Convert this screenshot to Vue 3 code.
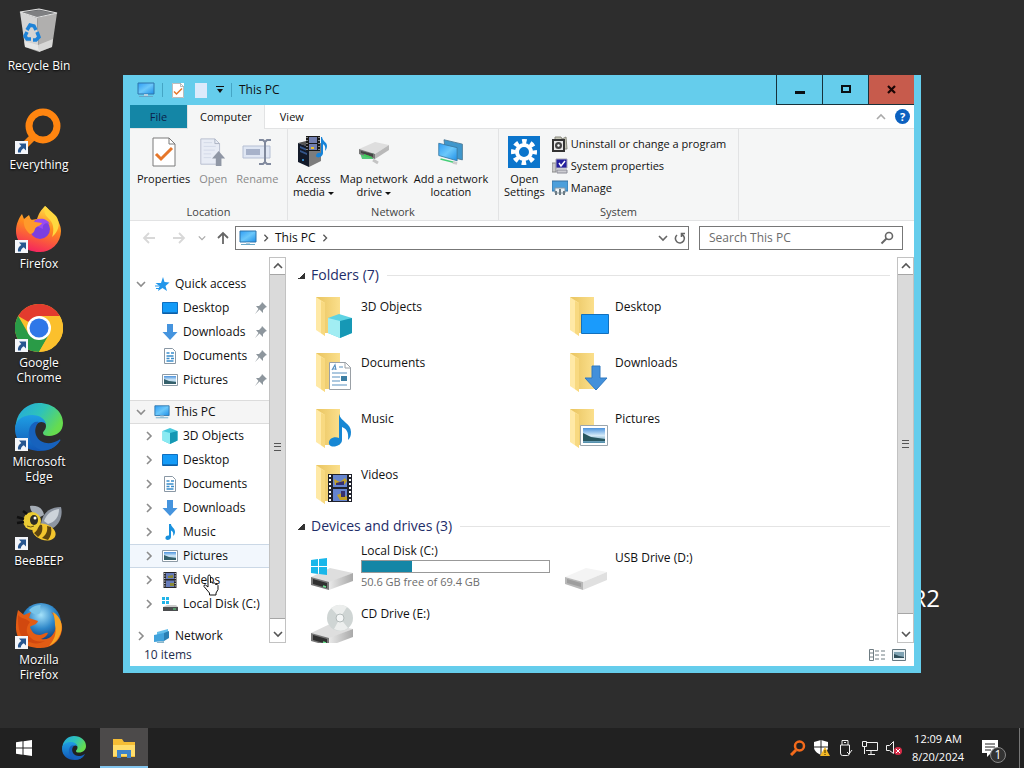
<template>
  <div class="screen">
    <svg class="sprite" aria-hidden="true">
      <defs>
        <linearGradient id="gBlue" x1="0" y1="0" x2="1" y2="1">
          <stop offset="0" stop-color="#2f9df5" /><stop offset=".5" stop-color="#6cc8fa" /><stop offset="1" stop-color="#1e8fe8" />
        </linearGradient>
        <linearGradient id="gFolder" x1="0" y1="0" x2="1" y2="0">
          <stop offset="0" stop-color="#e9c45f" /><stop offset="1" stop-color="#fbdf8c" />
        </linearGradient>
        <linearGradient id="gFox" x1=".7" y1="0" x2=".4" y2="1">
          <stop offset="0" stop-color="#ffe14d" /><stop offset=".45" stop-color="#ff8a1e" /><stop offset="1" stop-color="#f5245f" />
        </linearGradient>
        <linearGradient id="gEdgeA" x1="0" y1="0" x2="1" y2=".5">
          <stop offset="0" stop-color="#22a5e2" /><stop offset=".55" stop-color="#2fc3b8" /><stop offset="1" stop-color="#66dc4e" />
        </linearGradient>
        <linearGradient id="gEdgeB" x1="0" y1="0" x2="0" y2="1">
          <stop offset="0" stop-color="#1f9fe4" /><stop offset="1" stop-color="#1156b5" />
        </linearGradient>
        <linearGradient id="gBin" x1="0" y1="0" x2="1" y2="0">
          <stop offset="0" stop-color="#cfcfcf" /><stop offset=".6" stop-color="#bdbdbd" /><stop offset="1" stop-color="#8c8c8c" />
        </linearGradient>
        <linearGradient id="gDrive" x1="0" y1="0" x2="1" y2="0">
          <stop offset="0" stop-color="#e9e9e9" /><stop offset="1" stop-color="#a9a9a9" />
        </linearGradient>
        <radialGradient id="gGlobe" cx=".5" cy=".3" r=".7">
          <stop offset="0" stop-color="#a5e2fa" /><stop offset=".5" stop-color="#2d86c8" /><stop offset="1" stop-color="#0c2e6b" />
        </radialGradient>
        <linearGradient id="gPhoto" x1="0" y1="0" x2="0" y2="1">
          <stop offset="0" stop-color="#4c93dd" /><stop offset=".5" stop-color="#d4eaf8" /><stop offset="1" stop-color="#4e8ba8" />
        </linearGradient>
      </defs>

      <symbol id="shortcut" viewBox="0 0 13 13">
        <path d="M0 0h13v13H0z" fill="#f4f6fa" />
        <path d="M4 2.500h7v7L8.800 7.300C7 8.300 6 9.500 5.800 11.500H3C2.500 8.500 3.800 6.200 6.300 4.900z" fill="#27568f" />
      </symbol>
      <symbol id="recycle" viewBox="0 0 48 48">
        <path d="M5 5l17 5 2 34-14-4z" fill="#d4d4d4" />
        <path d="M22 10l20-4-5 34-13 5z" fill="#b0afae" />
        <path d="M5 5l19-3 18 4-20 5z" fill="#55575a" />
        <path d="M8 5.500l16-2.500 14 3-16 4z" fill="#7f8082" />
        <path d="M5 5l17 5.500L42 6 24 2z" fill="none" stroke="#e4e4e4" stroke-width="1.200" />
        <path d="M9 34l14 4 15-6-1 8-13 5-14-5z" fill="#f2f2f0" opacity=".6" />
        <g fill="none" stroke="#1e83d8" stroke-width="3.500"><path d="M12 23l3-5 4 1 2 4" /><path d="M22 25l2 5-3 3h-3" /><path d="M16 32h-4l-2-3 2-4" /></g>
      </symbol>
      <symbol id="everything" viewBox="0 0 48 48">
        <path d="M20 29L9 40" stroke="#f58416" stroke-width="7" />
        <circle cx="28" cy="20" r="14" fill="none" stroke="#ff8510" stroke-width="7" />
      </symbol>
      <symbol id="firefox" viewBox="0 0 48 48">
        <path d="M30 1c3 2 5 6 7 9 5 3 9 9 9 16a21 21 0 0 1-22 21C11 47 1 38 1 26 1 19 4 13 7 9l2 5 5-4 2 5 6-1c2-6 4-9 8-13z" fill="url(#gFox)" />
        <circle cx="25" cy="24" r="10" fill="#7c3fe0" />
        <path d="M17 19c5-8 15-6 18 0-5-2-8 1-7 5z" fill="#9a4bf0" />
        <path d="M9 14c4-1 8 0 11 3l7 1c-1 3-6 3-7 6-1 4-3 5-5 5-5-4-7-9-6-15z" fill="#ff9a2b" />
        <path d="M30 1c-2 7 1 10 5 14s4 12 2 17c6-5 8-12 6-17C42 10 36 7 30 1z" fill="#ffd83f" />
      </symbol>
      <symbol id="chrome" viewBox="0 0 48 48">
        <circle cx="24" cy="24" r="24" fill="#fbbf2d" />
        <path d="M24 24L3.200 12A24 24 0 0 1 44.800 12H24z" fill="#e33b2e" />
        <path d="M3.200 12A24 24 0 0 0 24 48l10.400-18L24 24 13.600 30z" fill="#2a9b47" />
        <path d="M24 12h20.800A24 24 0 0 1 24 48l10.400-18z" fill="#fbc02d" />
        <circle cx="24" cy="24" r="12" fill="#fff" /><circle cx="24" cy="24" r="9.500" fill="#2f77e8" />
      </symbol>
      <symbol id="edge" viewBox="0 0 48 48">
        <path d="M1 20C3 8 13 0 24 0c14 0 24 9 24 20 0 8-6 13-14 13-4 0-6-1-6-3s3-3 3-7c0-5-5-9-12-9C9 14 3 18 0 26z" fill="url(#gEdgeA)" />
        <path d="M0 26c0-9 8-14 17-14 8 0 13 4 14 9-2-2-5-3-8-1-5 3-6 10-2 16 5 8 15 8 23 3-4 6-11 9-19 9C11 48 0 39 0 26z" fill="url(#gEdgeB)" />
        <path d="M15 24c-4 10 2 20 11 23 7 1 14-2 19-9 1-1 0-2-1-1-8 5-18 4-22-3-3-5-2-11 2-15-4-1-7 1-9 5z" fill="#1762bd" />
      </symbol>
      <symbol id="bee" viewBox="0 0 48 48">
        <path d="M26 22C27 12 34 5 46 5c2 8-1 17-8 21z" fill="#8d95a1" /><path d="M29 19c3-8 8-11 15-12 0 8-4 13-11 15z" fill="#cdd3da" />
        <path d="M25 15c-6-2-10-6-10-11 7-1 13 2 14 9z" fill="#a6adb6" />
        <ellipse cx="29" cy="30" rx="12" ry="8" transform="rotate(20 29 30)" fill="#f3c52d" />
        <path d="M23 22c1 4-1 7-4 9l4 4c4-3 5-7 4-12zM32 24c1 5-1 9-5 12l6 2c3-4 4-8 3-13z" fill="#5c4410" />
        <circle cx="17" cy="19" r="9" fill="#ebcb34" />
        <ellipse cx="19" cy="18" rx="4" ry="5" fill="#2c2c25" /><circle cx="20" cy="16" r="1.500" fill="#fff" />
        <path d="M9 17l-7-2M9 20l-7 1M12 12L8 9" stroke="#111" stroke-width="2.500" /><path d="M12 24q4 2 7 0" fill="none" stroke="#6d5410" />
      </symbol>
      <symbol id="oldfox" viewBox="0 0 48 48">
        <circle cx="26" cy="22" r="20" fill="url(#gGlobe)" />
        <path d="M14 9c4-4 8-5 12-5-2 3 1 5-1 8-3 3-8 1-11-3z" fill="#79c4e8" />
        <path d="M3 9l6 5 7-3-2 6 9 3c-1 4-6 4-8 6 2 5 4 8 10 8 3 0 6-3 8-2-1 3-4 5-7 6 9 2 16-6 15-17-1-5-3-8-5-10 8 4 12 11 11 18-2 12-11 18-22 18C9 47 0 38 1 24c0-6 1-11 2-15z" fill="#e35c14" />
        <path d="M38 11c8 5 10 13 8 20-2 7-7 12-12 14 5-6 8-12 6-21 0-5-1-9-2-13z" fill="#f8a423" />
        <path d="M3 14c3 4 8 3 12 7-5 6-4 12 1 16 4 4 9 4 14 3-10 6-22 0-25-8-2-6-2-12-2-18z" fill="#c9400d" opacity=".7" />
      </symbol>

      <symbol id="pc" viewBox="0 0 18 16">
        <path d="M1 1h16v11H1z" fill="url(#gBlue)" stroke="#2f75ac" /><path d="M7 12h4v2H7z" fill="#b5cfdf" /><path d="M2 14.500h14" stroke="#67a7c8" stroke-width="1" />
      </symbol>
      <symbol id="doccheck" viewBox="0 0 24 30">
        <path d="M1 1h16l6 6v22H1z" fill="#fff" stroke="#7a7a7a" /><path d="M17 1v6h6" fill="none" stroke="#7a7a7a" />
        <path d="M4 17l5 5 11-11" fill="none" stroke="#e6772a" stroke-width="3" />
      </symbol>
      <symbol id="doc-up" viewBox="0 0 28 32">
        <path d="M1 2h15l5 5v22H1z" fill="#e8ecf5" stroke="#b6bdce" /><path d="M16 2v5h5" fill="none" stroke="#a9b0c0" /><path d="M4 6h9M4 10h13M4 14h12M4 18h8M4 22h8" stroke="#d2d9e8" />
        <path d="M20 15l7 8h-4v8h-6v-8h-4z" fill="#9097a5" />
      </symbol>
      <symbol id="rename" viewBox="0 0 30 28">
        <path d="M1 8h27v12H1z" fill="#dfe6f3" stroke="#b5bfd4" /><path d="M4 11h14v6H4z" fill="#a7b2ca" /><path d="M17 2h4l2 2 2-2h4M17 26h4l2-2 2 2h4M23 4v20" fill="none" stroke="#80899d" stroke-width="2" />
      </symbol>
      <symbol id="media" viewBox="0 0 32 32">
        <path d="M1 7l12-3 11 4-10 4z" fill="#555" /><path d="M1 7l11 4v20L1 26z" fill="#131a29" /><path d="M12 11l12-4v18l-12 6z" fill="#7d7d7d" /><path d="M3 10l7 3v2l-7-3zM3 14l7 3v2l-7-3z" fill="#34568a" /><circle cx="6" cy="24" r="1" fill="#3fa9f5" />
        <path d="M9 0h14v15H9z" fill="#191919" /><path d="M12 1h8v6h-8zM12 8h8v6h-8z" fill="#727fb0" /><path d="M10 1v14M22 1v14" stroke="#eee" stroke-dasharray="1 2" /><path d="M14 11h3v2h-3z" fill="#edc12c" />
        <path d="M25 1c1 5 5 5 5 9 0 2-1 4-2 5 1-5-1-6-2-7v9c0 4-6 6-7 3 0-3 3-4 5-3V1z" fill="#1683d8" />
      </symbol>
      <symbol id="netdrive" viewBox="0 0 32 24">
        <path d="M2 13h14l-1 6H4z" fill="#54c878" /><path d="M1 9L17 2l14 3-14 9z" fill="#dedede" /><path d="M1 9l16 5v5L1 14z" fill="#777" /><path d="M3 11l12 3v3L3 13z" fill="#444" /><path d="M17 14l14-9v5l-14 9z" fill="#b9b9b9" /><path d="M6 14l8 3v1l-8-2z" fill="#39d353" /><path d="M15 20l5 3" stroke="#c4c4c4" stroke-width="3" />
      </symbol>
      <symbol id="netplace" viewBox="0 0 32 30">
        <path d="M8 1l21 5v18L10 19z" fill="#3f97cc" stroke="#4b7894" /><path d="M2 5l21 5v15L2 19z" fill="url(#gBlue)" stroke="#3b7ba3" /><path d="M4 23l16 4" stroke="#45cf78" stroke-width="2" /><path d="M18 27l5 1" stroke="#ccc" stroke-width="3" />
      </symbol>
      <symbol id="gear" viewBox="0 0 32 32">
        <path d="M0 0h32v32H0z" fill="#0b75cc" /><circle cx="16" cy="16" r="10.500" fill="none" stroke="#fff" stroke-width="5" stroke-dasharray="4.400 3.850" stroke-dashoffset="2.200" /><circle cx="16" cy="16" r="7" fill="none" stroke="#fff" stroke-width="4" />
      </symbol>
      <symbol id="uninstall" viewBox="0 0 16 16">
        <path d="M3 1h6l1 2 4-2 1 12H3z" fill="#c5c6b7" stroke="#8b8b80" /><path d="M1 4h11v11H1z" fill="#e8e8e8" stroke="#333" stroke-width="2" /><circle cx="6.500" cy="9.500" r="3.500" fill="#444" /><circle cx="6.500" cy="9.500" r="1.200" fill="#fff" />
      </symbol>
      <symbol id="sysprops" viewBox="0 0 16 16">
        <path d="M0 5h4v9H0z" fill="#c9c9c9" stroke="#8a8a8a" /><path d="M4 1h11v9H4z" fill="#241f9e" stroke="#a5a5b5" /><path d="M7 5l2 3 4-5" fill="none" stroke="#fff" stroke-width="1.500" /><path d="M5 12h10v3H5z" fill="#cdcdd2" stroke="#8d8d98" />
      </symbol>
      <symbol id="manage" viewBox="0 0 16 16">
        <path d="M0 1h16v10H0z" fill="#4c9fdb" stroke="#3772a3" /><path d="M3 8h10v5H3z" fill="#eef3f6" stroke="#8799a5" /><path d="M4 11v4M8 9v6M12 11v4" stroke="#6d7c85" stroke-width="2" />
      </symbol>
      <symbol id="desktop" viewBox="0 0 16 16"><path d="M.5 2.500h15v11H.5z" fill="#149bf7" stroke="#0f6fc0" /><path d="M1 13h14" stroke="#0d4d8b" /></symbol>
      <symbol id="down" viewBox="0 0 16 16"><path d="M5 0h6v8h4.500L8 16 .5 8H5z" fill="#4594de" /></symbol>
      <symbol id="doc" viewBox="0 0 16 16"><path d="M2.500.5h8l3 3v12h-11z" fill="#fff" stroke="#8a98a5" /><path d="M4.500 5h3M9 5h3M4.500 8h7M4.500 10.500h3M9 10.500h3M4.500 13h7" stroke="#3a8dcb" stroke-width="1.300" /></symbol>
      <symbol id="pic" viewBox="0 0 16 16"><path d="M.5 2.500h15v11H.5z" fill="#fff" stroke="#8d9ba6" /><path d="M2 4h12v8H2z" fill="url(#gPhoto)" /><path d="M2 7l5 2 7 1v2H2z" fill="#35606b" /></symbol>
      <symbol id="music" viewBox="0 0 16 16"><path d="M7 0h2c0 3 4 4 4 8 0 2-1 3-2 4 1-4-1-5-2-5.500V13c0 3-5 4-5.500 1.500C3 12 5.500 11 7 11.500z" fill="#1991de" /></symbol>
      <symbol id="video" viewBox="0 0 16 16"><path d="M1.500 0h13v16h-13z" fill="#26262c" /><path d="M4 1h8v6H4zM4 8.500h8V15H4z" fill="#667bbb" /><path d="M6 4l5-1v3H6zM8 11h4v3H8z" fill="#8b8a35" /><path d="M2.800 1v15M13.200 1v15" stroke="#fff" stroke-width="1" stroke-dasharray="1 1.500" /></symbol>
      <symbol id="cube" viewBox="0 0 16 16"><path d="M8 0l7.500 3v9.500L8 16 .5 12.500V3z" fill="#47c9dc" /><path d="M.5 3L8 5v11L.5 12.500z" fill="#8aeaf2" /><path d="M8 5l7.500-2v9.500L8 16z" fill="#1597b3" /></symbol>
      <symbol id="disk" viewBox="0 0 16 16"><path d="M0 1h3v3H0zM4 1h3v3H4zM0 5h3v3H0zM4 5h3v3H4z" fill="#22b4e8" /><path d="M1 11l4-2h9l2 2z" fill="#cacaca" /><path d="M1 11h15v4H1z" fill="#4b4d4f" /><path d="M11 13h3" stroke="#60e080" /></symbol>
      <symbol id="network" viewBox="0 0 16 16"><path d="M3 4l11-3v9L3 13z" fill="#62bdea" /><path d="M0 7l10-2v8L0 14z" fill="#41a3dc" /><path d="M10 5l5-2v7l-5 3z" fill="#2a7fb3" /><path d="M3 15l7-1" stroke="#8ab6cb" stroke-width="2" /></symbol>
      <symbol id="star" viewBox="0 0 16 16"><path d="M9 1l1.500 5 5 .5-4 3.500 1.500 5-4.500-3L4 15l1.500-5L1.500 7H7z" fill="#2296ea" /><path d="M1 10h4M2 12.500h3" stroke="#2296ea" /></symbol>
      <symbol id="pin" viewBox="0 0 12 12"><path d="M7 0l5 5-1.500.5L8 8v3L4.500 7.500 0 12l3.500-5L1 4h3l2.500-2.500z" fill="#8d969d" /></symbol>
      <symbol id="chev" viewBox="0 0 10 10"><path d="M3 1l4 4-4 4" fill="none" stroke="currentColor" stroke-width="1.600" /></symbol>
      <symbol id="chevd" viewBox="0 0 10 10"><path d="M1 3l4 4 4-4" fill="none" stroke="currentColor" stroke-width="1.600" /></symbol>
      <symbol id="chevu" viewBox="0 0 10 10"><path d="M1 7l4-4 4 4" fill="none" stroke="currentColor" stroke-width="1.600" /></symbol>
      <symbol id="arrow" viewBox="0 0 14 14"><path d="M13 7H2M7 2L2 7l5 5" fill="none" stroke="currentColor" stroke-width="1.800" /></symbol>

      <symbol id="folder" viewBox="0 0 48 48"><path d="M5 4h24v36H13z" fill="url(#gFolder)" /><path d="M5 4l9 6v33l-9-6z" fill="#ffe9a6" /><path d="M14 10v33l-4-3V8z" fill="#f8d980" /></symbol>
      <symbol id="big-cube" viewBox="0 0 48 48"><path d="M28 21l13 4v15l-12 5-12-5V25z" fill="#5ed3e3" /><path d="M17 25l12 3v17l-12-5z" fill="#a1edf3" /><path d="M29 28l12-3v15l-12 5z" fill="#1698b5" /></symbol>
      <symbol id="big-desktop" viewBox="0 0 48 48"><path d="M16.500 21.500h27v19h-27z" fill="#1a9bfc" stroke="#1270bd" /></symbol>
      <symbol id="big-doc" viewBox="0 0 48 48"><path d="M18.500 13.500h16l5 5v22h-21z" fill="#fff" stroke="#9aa0a6" /><path d="M34 13v6h6" fill="none" stroke="#9aa0a6" /><path d="M21 21l3-5 1 5M22 20h3M28 18h4M21 24h15M21 28h8M21 32h8M21 36h15" fill="none" stroke="#5b91c0" stroke-width="1.200" /><path d="M30 27h6v5h-6z" fill="#3c7ea3" /></symbol>
      <symbol id="big-down" viewBox="0 0 48 48"><path d="M27 17h8v12h7L31 41 20 29h7z" fill="#4290db" stroke="#2f78c0" /></symbol>
      <symbol id="big-music" viewBox="0 0 48 48"><path d="M28 9c2 8 12 9 12 18 0 4-1 6-3 8 1-9-2-11-6-13v13c0 6-11 9-13 4-1-5 5-8 10-6z" fill="#1787d4" /></symbol>
      <symbol id="big-pic" viewBox="0 0 48 48"><path d="M15.500 20.500h27v20h-27z" fill="#fff" stroke="#9aa5ad" /><path d="M18 23h22v15H18z" fill="url(#gPhoto)" /><path d="M18 28l8 4 14 2v2H18z" fill="#28565f" /></symbol>
      <symbol id="big-video" viewBox="0 0 48 48"><path d="M17 13h24v28H17z" fill="#20222c" /><path d="M22 14h14v12H22zM22 28h14v12H22z" fill="#6584cf" /><path d="M23 18l6 3 5-4 2 3-3 4h-9zM26 34l5-2 5 4v3h-7z" fill="#c3a127" /><path d="M25 22l8-2v4h-8zM30 30h4v6h-4z" fill="#37306d" /><path d="M19 14v27M39 14v27" stroke="#fff" stroke-width="2" stroke-dasharray="2 2" /></symbol>
      <symbol id="drive-base" viewBox="0 0 48 48"><path d="M0 33l19-9 23 5-24 10z" fill="#dedede" /><path d="M0 33l18 5v8L0 41z" fill="#777" /><path d="M2 35l14 4v5L2 40z" fill="#303030" /><path d="M18 38l24-9v8l-24 9z" fill="url(#gDrive)" /><path d="M12 42l3 1" stroke="#6be391" stroke-width="1.500" /></symbol>
      <symbol id="big-disk" viewBox="0 0 48 48"><use href="#drive-base" /><path d="M0 16l7-1v7H0zM8 15l8-1v8H8zM0 23h7v7l-7-1zM8 23h8v8l-8-1z" fill="#19b7ea" /></symbol>
      <symbol id="big-usb" viewBox="0 0 48 48"><path d="M0 33l21-9 21 4-24 10z" fill="#f4f4f4" /><path d="M0 33l18 5v8L0 40z" fill="#b8b8b8" /><path d="M2 35l14 4v4L2 39z" fill="#9e9e9e" /><path d="M18 38l24-10v8l-24 10z" fill="#e0e0e0" /></symbol>
      <symbol id="big-cd" viewBox="0 0 48 48"><use href="#drive-base" /><circle cx="29" cy="18" r="13" fill="#cfd5d4" /><path d="M29 18L20 8q8-6 16-1zM29 18l8 10q-6 5-14 1z" fill="#eceeed" /><circle cx="29" cy="18" r="4" fill="#f4f6f6" stroke="#b4bbba" /></symbol>
      <symbol id="winlogo" viewBox="0 0 16 16"><path d="M0 2.300L6.500 1.300v6.200H0zM7.500 1.200L16 0v7.500H7.500zM0 8.500h6.500v6.200L0 13.700zM7.500 8.500H16V16l-8.500-1.200z" fill="#fff" /></symbol>
      <symbol id="explorer" viewBox="0 0 24 22"><path d="M1 2h9l2 3h11v15H1z" fill="#f5bd35" /><path d="M1 8h22v11H1z" fill="#ffdd6b" /><path d="M5 21v-8h14v8h-4v-4H9v4z" fill="#3f83c8" /></symbol>
      <symbol id="tray-search" viewBox="0 0 16 16"><path d="M6 10l-5 5" stroke="#f36a1b" stroke-width="3" /><circle cx="9.500" cy="6" r="4.500" fill="none" stroke="#f36a1b" stroke-width="2.500" /></symbol>
      <symbol id="tray-shield" viewBox="0 0 16 16"><path d="M7 0l7 2v5c0 4-3 6-7 8-4-2-7-4-7-8V2z" fill="#fff" /><path d="M7 0v15M0 7h14" stroke="#222" /><path d="M11 7l5 9H6z" fill="#f3b825" /><path d="M11 10v3M11 14v1" stroke="#3b2c00" /></symbol>
      <symbol id="tray-usb" viewBox="0 0 16 16"><path d="M4 5V.5h6V5M2.500 5h9v8q0 2.500-2 2.500h-5q-2 0-2-2.500zM6 2.500h2" fill="none" stroke="#f0f0f0" /><path d="M9 12l2 2 3-4" fill="none" stroke="#f0f0f0" /></symbol>
      <symbol id="tray-net" viewBox="0 0 16 16"><path d="M4 2.500h11.500v8H4M9 11v3M6 14.500h7M.5 1.500h4v5h-4zM2.500 7v7" fill="none" stroke="#f0f0f0" /></symbol>
      <symbol id="tray-mute" viewBox="0 0 16 16"><path d="M.5 5.500h3l4-4v12l-4-3h-3z" fill="none" stroke="#f0f0f0" /><circle cx="12" cy="11" r="4" fill="#d72c48" /><path d="M10 9l4 4M14 9l-4 4" stroke="#fff" /></symbol>
      <symbol id="hand" viewBox="0 0 16 22"><path d="M5 13V2.500Q5 1 6.200 1t1.300 1.500V9l.5-1q2-.5 2 1.500.5-1 1.500-.5t1 1.500q2-.8 2.500 1v4l-2 3.500V21H6.500v-2L1 12.500q-.5-2 1.500-1.500z" fill="#fff" stroke="#111" /></symbol>
    </svg>

    <main class="desktop">
      <p class="watermark">R2</p>
      <div class="shortcuts">
        <button v-for="s in shortcuts" :key="s.label" class="shortcut">
          <span class="shortcut-art">
            <svg class="shortcut-icon"><use :href="'#' + s.icon" /></svg>
            <svg v-if="s.link" class="shortcut-arrow"><use href="#shortcut" /></svg>
          </span>
          <span>{{ s.label }}</span>
        </button>
      </div>

      <section class="window" aria-label="This PC">
        <header class="titlebar">
          <svg class="i18"><use href="#pc" /></svg>
          <span class="bar"></span>
          <button class="quick" aria-label="Properties"><svg class="quick-icon white"><use href="#doccheck" /></svg></button>
          <button class="quick" aria-label="New folder"><span class="blank"></span></button>
          <button class="quick narrow" aria-label="Customize">
            <svg width="8" height="8" viewBox="0 0 8 8"><path d="M0 .5h8" stroke="#111" /><path d="M1 3h6L4 7z" fill="#111" /></svg>
          </button>
          <span class="bar"></span>
          <h1>This PC</h1>
          <div class="controls">
            <button aria-label="Minimize"><svg width="12" height="12"><path d="M1 7h10v3H1z" fill="#0a1014" /></svg></button>
            <button aria-label="Maximize"><svg width="12" height="12"><path d="M2 2h8v6H2z" fill="none" stroke="#0a1014" stroke-width="2" /></svg></button>
            <button class="close" aria-label="Close"><svg width="12" height="12"><path d="M2 2l7 7M9 2l-7 7" stroke="#1b0505" stroke-width="2.200" /></svg></button>
          </div>
        </header>

        <nav class="tabs">
          <button class="file">File</button>
          <button class="active">Computer</button>
          <button>View</button>
          <span class="tabs-end">
            <button class="icon-btn pale" aria-label="Collapse ribbon"><svg class="i10"><use href="#chevu" /></svg></button>
            <button class="help" aria-label="Help">?</button>
          </span>
        </nav>

        <div class="ribbon">
          <div class="group location">
            <div class="tools">
              <button class="tool"><svg class="i32" viewBox="-4 -1 32 32"><use href="#doccheck" width="24" height="30" /></svg><span>Properties</span></button>
              <button class="tool slim" disabled><svg class="i32"><use href="#doc-up" /></svg><span>Open</span></button>
              <button class="tool" disabled><svg class="i32"><use href="#rename" /></svg><span>Rename</span></button>
            </div>
            <p>Location</p>
          </div>
          <div class="group net">
            <div class="tools">
              <button class="tool"><svg class="i32"><use href="#media" /></svg><span>Access<br>media <i class="caret"></i></span></button>
              <button class="tool"><svg class="i32"><use href="#netdrive" /></svg><span>Map network<br>drive <i class="caret"></i></span></button>
              <button class="tool"><svg class="i32 pad"><use href="#netplace" /></svg><span>Add a network<br>location</span></button>
            </div>
            <p>Network</p>
          </div>
          <div class="group system">
            <div class="tools">
              <button class="tool"><svg class="i32"><use href="#gear" /></svg><span>Open<br>Settings</span></button>
              <div class="list">
                <button><svg class="i16"><use href="#uninstall" /></svg>Uninstall or change a program</button>
                <button><svg class="i16"><use href="#sysprops" /></svg>System properties</button>
                <button><svg class="i16"><use href="#manage" /></svg>Manage</button>
              </div>
            </div>
            <p>System</p>
          </div>
        </div>

        <div class="address-row">
          <div class="history">
            <button class="icon-btn faint" aria-label="Back"><svg class="i14"><use href="#arrow" /></svg></button>
            <button class="icon-btn faint" aria-label="Forward"><svg class="i14 flip"><use href="#arrow" /></svg></button>
            <button class="icon-btn pale recent" aria-label="Recent locations"><svg class="i8"><use href="#chevd" /></svg></button>
            <button class="icon-btn" aria-label="Up"><svg class="i14 up"><use href="#arrow" /></svg></button>
          </div>
          <div class="address">
            <svg class="i18"><use href="#pc" /></svg>
            <svg class="i8"><use href="#chev" /></svg>
            <a href="#">This PC</a>
            <svg class="i8"><use href="#chev" /></svg>
            <span class="address-end">
              <button class="icon-btn" aria-label="Previous locations"><svg class="i10"><use href="#chevd" /></svg></button>
              <button class="icon-btn" aria-label="Refresh">
                <svg class="i12" viewBox="0 0 12 12"><path d="M3 3A4.500 4.500 0 1 0 8 2.500M11 1.500H7.500V5" fill="none" stroke="currentColor" stroke-width="1.600" /></svg>
              </button>
            </span>
          </div>
          <label class="search">
            <input v-model="query" type="text" placeholder="Search This PC" aria-label="Search This PC">
            <svg class="i14" viewBox="0 0 14 14"><circle cx="9" cy="5" r="3.500" fill="none" stroke="#666" stroke-width="1.600" /><path d="M6.500 7.500L1.500 12.500" stroke="#666" stroke-width="2" /></svg>
          </label>
        </div>

        <div class="panes">
          <nav class="tree">
            <button
              v-for="(n, i) in tree"
              :key="i"
              :class="{ child: n.child, gap: n.gap, current: n.current, hover: n.hover }"
            >
              <svg v-if="n.mark" class="i10 mark"><use :href="'#' + n.mark" /></svg>
              <span v-else class="i10"></span>
              <svg class="node-icon"><use :href="'#' + n.icon" /></svg>
              <span>{{ n.label }}</span>
              <svg v-if="n.pinned" class="i12 pin"><use href="#pin" /></svg>
            </button>
          </nav>
          <div class="scrollbar">
            <button aria-label="Scroll up"><svg class="i10"><use href="#chevu" /></svg></button>
            <span class="thumb"><i></i></span>
            <button aria-label="Scroll down"><svg class="i10"><use href="#chevd" /></svg></button>
          </div>

          <div class="content">
            <h2><i class="fold"></i>Folders (7)</h2>
            <div class="items">
              <button v-for="f in folders" :key="f.label" class="item">
                <span class="item-icon">
                  <svg viewBox="0 0 48 48"><use href="#folder" /><use :href="'#' + f.icon" /></svg>
                </span>
                <span class="item-text single">{{ f.label }}</span>
              </button>
            </div>
            <h2><i class="fold"></i>Devices and drives (3)</h2>
            <div class="items">
              <button v-for="d in drives" :key="d.label" class="item">
                <span class="item-icon"><svg viewBox="0 0 48 48"><use :href="'#' + d.icon" /></svg></span>
                <span class="item-text" :class="{ single: !d.caption }">
                  {{ d.label }}
                  <template v-if="d.caption">
                    <span class="usage"><span class="used" :style="{ width: d.used + '%' }"></span></span>
                    <small>{{ d.caption }}</small>
                  </template>
                </span>
              </button>
            </div>
          </div>
          <div class="scrollbar">
            <button aria-label="Scroll up"><svg class="i10"><use href="#chevu" /></svg></button>
            <span class="thumb short"><i></i></span>
            <button aria-label="Scroll down"><svg class="i10"><use href="#chevd" /></svg></button>
          </div>
        </div>

        <footer class="status">
          <span>10 items</span>
          <span class="views">
            <button class="icon-btn" aria-label="Details view">
              <svg width="16" height="12" viewBox="0 0 16 12"><path d="M.5.500h4v11h-4zM.5 4h4M.5 8h4M6 2h4M12 2h4M6 6h4M12 6h4M6 10h4M12 10h4" fill="none" stroke="#6f7c82" /></svg>
            </button>
            <button class="icon-btn" aria-label="Large icons view">
              <svg width="14" height="12" viewBox="0 0 14 12"><path d="M.5.500h13v11H.5z" fill="#eaf2f5" stroke="#66777f" /><path d="M2 3h10v6H2z" fill="#7fa3b3" /><path d="M2 5l5 2 5 1v1H2z" fill="#2f4f5b" /></svg>
            </button>
          </span>
        </footer>
      </section>
      <svg class="pointer"><use href="#hand" /></svg>
    </main>

    <footer class="taskbar">
      <button class="task" aria-label="Start"><svg class="i16"><use href="#winlogo" /></svg></button>
      <button class="task" aria-label="Microsoft Edge"><svg class="i24"><use href="#edge" /></svg></button>
      <button class="task running" aria-label="File Explorer"><svg class="i24"><use href="#explorer" /></svg></button>
      <div class="tray">
        <button v-for="t in tray" :key="t.icon" :aria-label="t.label"><svg class="i16"><use :href="'#' + t.icon" /></svg></button>
      </div>
      <button class="clock"><span>12:09 AM</span><span>8/20/2024</span></button>
      <button class="notify" aria-label="Notifications">
        <svg width="17" height="17" viewBox="0 0 17 17"><path d="M0 0h16v13H9l-4 4v-4H0z" fill="#fff" /><path d="M3 4h10M3 7h10M3 10h6" stroke="#222" stroke-width="1.200" /></svg>
        <span class="badge">1</span>
      </button>
      <span class="show-desktop"></span>
    </footer>
  </div>
</template>

<script setup>
import { ref } from 'vue';

const query = ref('');

const shortcuts = [
  { label: 'Recycle Bin', icon: 'recycle' },
  { label: 'Everything', icon: 'everything', link: true },
  { label: 'Firefox', icon: 'firefox', link: true },
  { label: 'Google Chrome', icon: 'chrome', link: true },
  { label: 'Microsoft Edge', icon: 'edge', link: true },
  { label: 'BeeBEEP', icon: 'bee', link: true },
  { label: 'Mozilla Firefox', icon: 'oldfox', link: true }
];

const tree = [
  { label: 'Quick access', icon: 'star', mark: 'chevd' },
  { label: 'Desktop', icon: 'desktop', child: true, pinned: true },
  { label: 'Downloads', icon: 'down', child: true, pinned: true },
  { label: 'Documents', icon: 'doc', child: true, pinned: true },
  { label: 'Pictures', icon: 'pic', child: true, pinned: true },
  { label: 'This PC', icon: 'pc', mark: 'chevd', gap: true, current: true },
  { label: '3D Objects', icon: 'cube', mark: 'chev', child: true },
  { label: 'Desktop', icon: 'desktop', mark: 'chev', child: true },
  { label: 'Documents', icon: 'doc', mark: 'chev', child: true },
  { label: 'Downloads', icon: 'down', mark: 'chev', child: true },
  { label: 'Music', icon: 'music', mark: 'chev', child: true },
  { label: 'Pictures', icon: 'pic', mark: 'chev', child: true, hover: true },
  { label: 'Videos', icon: 'video', mark: 'chev', child: true },
  { label: 'Local Disk (C:)', icon: 'disk', mark: 'chev', child: true },
  { label: 'Network', icon: 'network', mark: 'chev', gap: true }
];

const folders = [
  { label: '3D Objects', icon: 'big-cube' },
  { label: 'Desktop', icon: 'big-desktop' },
  { label: 'Documents', icon: 'big-doc' },
  { label: 'Downloads', icon: 'big-down' },
  { label: 'Music', icon: 'big-music' },
  { label: 'Pictures', icon: 'big-pic' },
  { label: 'Videos', icon: 'big-video' }
];

const drives = [
  { label: 'Local Disk (C:)', icon: 'big-disk', used: 27, caption: '50.6 GB free of 69.4 GB' },
  { label: 'USB Drive (D:)', icon: 'big-usb' },
  { label: 'CD Drive (E:)', icon: 'big-cd' }
];

const tray = [
  { icon: 'tray-search', label: 'Everything' },
  { icon: 'tray-shield', label: 'Windows Security' },
  { icon: 'tray-usb', label: 'Safely remove hardware' },
  { icon: 'tray-net', label: 'Network' },
  { icon: 'tray-mute', label: 'Volume muted' }
];
</script>

<style>
body {
  background: #2d2d2d;
}
</style>

<style scoped>
.screen {
  display: flex;
  flex-direction: column;
  height: 100vh;
  overflow: hidden;
  background: #2d2d2d;
  color: #111;
  font: 12px/16px "Open Sans", "Noto Sans", sans-serif;
}

button,
input {
  font: inherit;
  color: inherit;
  background: none;
  border: 0;
  padding: 0;
  margin: 0;
}

h1, h2, p {
  margin: 0;
  font-weight: 400;
}

svg {
  display: block;
  flex: none;
}

.sprite {
  position: absolute;
  width: 0;
  height: 0;
}

.i8 { width: 8px; height: 8px; }
.i10 { width: 10px; height: 10px; flex: none; }
.i12 { width: 12px; height: 12px; }
.i14 { width: 14px; height: 14px; }
.i16 { width: 16px; height: 16px; }
.i18 { width: 18px; height: 16px; }
.i24 { width: 24px; height: 24px; }
.i32 { width: 32px; height: 32px; }
.pad { padding: 2px; box-sizing: border-box; }

.icon-btn {
  display: flex;
  color: #666;
}

.pale { color: #aaa; }
.faint { color: #d8d8d8; }
.flip { transform: scaleX(-1); }
.up { transform: rotate(90deg); }

/* Desktop */
.desktop {
  position: relative;
  flex: 1;
  min-height: 0;
}

.watermark {
  position: absolute;
  right: 84px;
  bottom: 114px;
  color: #fff;
  font-size: 24px;
  line-height: 32px;
}

.shortcuts {
  display: grid;
  grid-auto-rows: 99px;
  width: 78px;
}

.shortcut {
  display: flex;
  flex-direction: column;
  align-items: center;
  gap: 3px;
  padding: 7px 6px 0;
  color: #fff;
  line-height: 15px;
  text-shadow: 0 1px 2px #000;
}

.shortcut-art {
  position: relative;
}

.shortcut-icon {
  width: 48px;
  height: 48px;
}

.shortcut-arrow {
  position: absolute;
  left: 0;
  bottom: 0;
  width: 13px;
  height: 13px;
}

/* Explorer window */
.window {
  position: absolute;
  inset: 75px 103px 55px 123px;
  display: flex;
  flex-direction: column;
  padding: 0 7px 7px;
  background: #65cdec;
}

.titlebar {
  display: flex;
  align-items: center;
  gap: 7px;
  height: 30px;
  padding-left: 7px;
}

.bar {
  width: 1px;
  height: 14px;
  background: #45a5c5;
}

.quick {
  display: flex;
  justify-content: center;
  width: 16px;
}

.narrow { width: 8px; }

.quick-icon {
  width: 12px;
  height: 15px;
}

.white { background: #fff; }

.blank {
  width: 12px;
  height: 15px;
  background: #dceafb;
}

.titlebar h1 {
  flex: 1;
  font-size: 12px;
}

.controls {
  display: flex;
  align-self: stretch;
}

.controls button {
  display: flex;
  align-items: center;
  justify-content: center;
  width: 46px;
  border-left: 1px solid #17323b;
  border-bottom: 1px solid #17323b;
  box-sizing: content-box;
}

.controls button {
  box-sizing: border-box;
}

.controls .close {
  background: #c75b4c;
}

.tabs {
  display: flex;
  height: 24px;
  background: #fff;
  border-bottom: 1px solid #e2e3e4;
  box-sizing: border-box;
  font-size: 11px;
}

.tabs > button {
  padding: 0 15px;
}

.tabs .file {
  width: 57px;
  background: #1486a6;
  color: #0b1f4a;
}

.tabs .active {
  padding: 0 12px;
  margin-bottom: -1px;
  background: #f5f6f6;
  border: solid #e2e3e4;
  border-width: 0 1px;
}

.tabs-end {
  display: flex;
  align-items: center;
  gap: 9px;
  margin-left: auto;
  padding-right: 4px;
}

.help {
  width: 15px;
  height: 15px;
  border-radius: 50%;
  background: #0c61c0;
  color: #fff;
  font-weight: 700;
  line-height: 15px;
}

.ribbon {
  display: flex;
  height: 92px;
  background: #f5f6f6;
  border-bottom: 1px solid #e2e3e4;
  box-sizing: border-box;
  font-size: 11px;
}

.group {
  display: flex;
  flex-direction: column;
  justify-content: space-between;
  padding-top: 7px;
  border-right: 1px solid #e2e3e4;
  box-sizing: border-box;
}

.group.location { width: 158px; }
.group.net { width: 211px; }
.group.system { width: 240px; }

.group > p {
  text-align: center;
  color: #444;
}

.tools {
  display: flex;
  padding-left: 2px;
}

.tool {
  display: flex;
  flex-direction: column;
  align-items: center;
  gap: 4px;
  padding: 0 3px;
  line-height: 13px;
  white-space: nowrap;
}

.tool:disabled {
  color: #8a8a8a;
}

.location .tool { padding: 0 5px; }
.location .slim { padding: 0 2px; }

.location .tool:nth-child(n + 2) svg {
  padding: 1px;
  box-sizing: border-box;
}

.caret {
  display: inline-block;
  border: 3px solid transparent;
  border-top-color: #111;
  border-bottom: 0;
  vertical-align: middle;
}

.list {
  display: flex;
  flex-direction: column;
  gap: 6px;
  padding-left: 4px;
}

.list button {
  display: flex;
  align-items: center;
  gap: 3px;
  white-space: nowrap;
}

.address-row {
  display: flex;
  align-items: center;
  gap: 10px;
  padding: 5px 11px 7px 12px;
  background: #fff;
}

.history {
  display: flex;
  align-items: center;
  gap: 16px;
  margin-right: -5px;
}

.recent {
  margin: 0 -6px 0 -4px;
}

.address,
.search {
  display: flex;
  align-items: center;
  height: 24px;
  border: 1px solid #777;
  box-sizing: border-box;
  color: #555;
}

.address {
  flex: 1;
  gap: 5px;
  padding: 0 2px 0 3px;
}

.address a {
  color: #111;
  text-decoration: none;
}

.address-end {
  display: flex;
  align-items: center;
  gap: 6px;
  margin-left: auto;
}

.search {
  width: 204px;
  padding: 0 8px 0 9px;
}

.search input {
  flex: 1;
  min-width: 0;
  outline: none;
}

.search input::placeholder {
  color: #6d6d6d;
  opacity: 1;
}

.panes {
  display: flex;
  flex: 1;
  min-height: 0;
  background: #fff;
}

.tree {
  display: flex;
  flex-direction: column;
  width: 139px;
  padding-top: 15px;
  overflow: hidden;
  box-sizing: border-box;
}

.tree button {
  display: flex;
  flex: none;
  align-items: center;
  height: 24px;
  padding: 0 2px 0 6px;
  white-space: nowrap;
  box-sizing: border-box;
}

.tree .child { padding-left: 14px; }
.tree .gap { margin-top: 8px; }

.tree .current {
  background: #f5f5f5;
  border: solid #dcdcdc;
  border-width: 1px 0;
}

.tree .hover {
  background: #f2f7fd;
  border: solid #cbd8e6;
  border-width: 1px 0;
}

.node-icon {
  width: 16px;
  height: 16px;
  margin: 0 5px 0 8px;
}

.mark { color: #8c8c8c; }
.pin { margin-left: auto; }

.scrollbar {
  display: flex;
  flex-direction: column;
  width: 17px;
  border: 1px solid #c2c2c2;
  box-sizing: border-box;
}

.scrollbar button {
  display: flex;
  flex: none;
  align-items: center;
  justify-content: center;
  height: 16px;
  color: #555;
}

.thumb {
  display: flex;
  flex: 1;
  align-items: center;
  justify-content: center;
  margin-bottom: 7px;
  background: #dadada;
  border: solid #a6a6a6;
  border-width: 1px 0;
}

.thumb.short {
  margin-bottom: 12px;
}

.thumb i {
  width: 7px;
  height: 2px;
  margin-bottom: 4px;
  border: solid #555;
  border-width: 1px 0;
  box-shadow: 0 3px #dadada, 0 4px #555;
}

.content {
  flex: 1;
  min-width: 0;
  padding: 7px 7px 0 12px;
  overflow: hidden;
}

.content h2 {
  display: flex;
  align-items: center;
  height: 22px;
  margin-bottom: 5px;
  color: #1e2d69;
  font-size: 14px;
}

.content h2::after {
  content: "";
  flex: 1;
  height: 1px;
  margin-left: 8px;
  background: #e4e4e4;
}

.fold {
  width: 7px;
  height: 7px;
  margin-right: 6px;
  background: linear-gradient(135deg, transparent 50%, #333 50%);
}

.items {
  display: grid;
  grid-template-columns: repeat(auto-fill, 254px);
  padding-left: 13px;
}

.item {
  display: flex;
  align-items: flex-start;
  gap: 2px;
  height: 56px;
  text-align: left;
}

.item-icon {
  padding-top: 2px;
}

.item-icon svg {
  width: 48px;
  height: 48px;
}

.item-text {
  flex: 1;
  max-width: 189px;
  padding-top: 1px;
}

.item-text.single {
  padding-top: 8px;
}

.usage {
  display: block;
  height: 13px;
  margin: 1px 0;
  border: 1px solid #999;
  box-sizing: border-box;
}

.used {
  display: block;
  height: 100%;
  background: #1486a6;
}

.item-text small {
  display: block;
  color: #6d6d6d;
  font-size: 11px;
}

.status {
  display: flex;
  align-items: center;
  justify-content: space-between;
  height: 23px;
  padding: 0 8px 0 14px;
  background: #fff;
  color: #1e2d4d;
}

.views {
  display: flex;
  gap: 7px;
}

.pointer {
  position: absolute;
  left: 203px;
  top: 574px;
  width: 16px;
  height: 22px;
}

/* Taskbar */
.taskbar {
  display: flex;
  flex: none;
  align-items: stretch;
  height: 40px;
  background: #212121;
  color: #fff;
}

.task {
  display: flex;
  align-items: center;
  justify-content: center;
  width: 48px;
  margin-right: 2px;
}

.task.running {
  background: #4c4a4a;
  box-shadow: inset 0 -2px #83c5ee;
}

.tray {
  display: flex;
  align-items: center;
  gap: 8px;
  margin-left: auto;
}

.clock {
  display: flex;
  flex-direction: column;
  justify-content: center;
  width: 72px;
  font-size: 11px;
  line-height: 18px;
}

.notify {
  position: relative;
  display: flex;
  align-items: center;
  width: 24px;
  margin: 0 13px 0 8px;
}

.badge {
  position: absolute;
  right: 0;
  bottom: 5px;
  width: 16px;
  height: 16px;
  border: 1px solid #888;
  border-radius: 50%;
  background: #333;
  line-height: 14px;
  box-sizing: border-box;
}

.show-desktop {
  width: 4px;
  border-left: 1px solid #777;
}
</style>
